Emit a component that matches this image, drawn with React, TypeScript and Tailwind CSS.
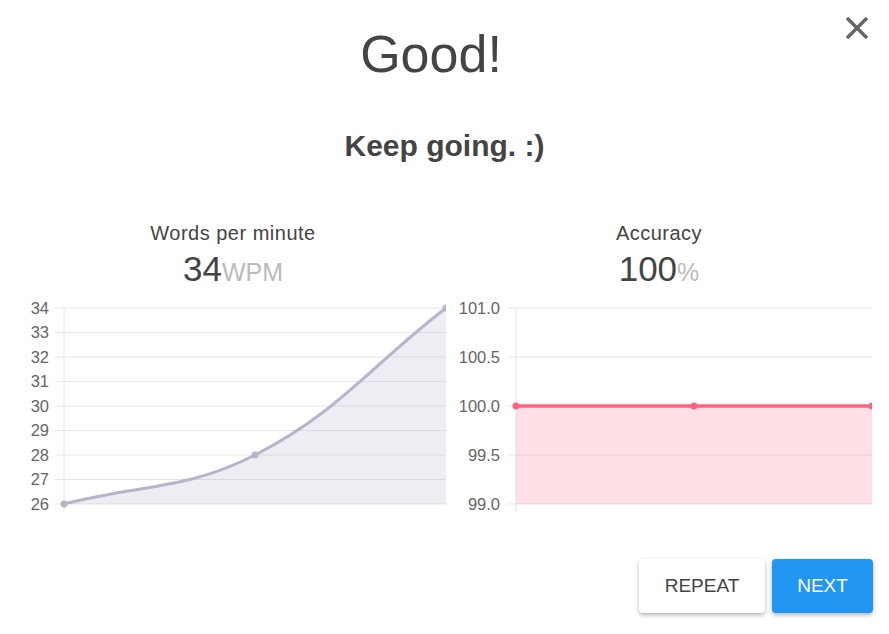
import React from "react";

const font = { fontFamily: '"Liberation Sans", Arial, sans-serif' };

function WpmChart() {
  const ys = [34, 33, 32, 31, 30, 29, 28, 27, 26];
  return (
    <svg width="426" height="224" className="block overflow-hidden">
      {ys.map((v, i) => {
        const y = 12 + i * 24.5;
        return (
          <g key={v}>
            <line x1="35" x2="426" y1={y} y2={y} stroke="#e6e6e6" strokeWidth="1" />
            <text x="29" y={y + 5.5} textAnchor="end" fontSize="16.5" fill="#666" style={font}>
              {v}
            </text>
          </g>
        );
      })}
      <line x1="44" x2="44" y1="12" y2="216" stroke="#e6e6e6" strokeWidth="1" />
      <path
        d="M44 208 C120.4 188.4 166.2 194.3 235 159 C319 115.9 349.6 70.8 426 12 L426 208 Z"
        fill="rgba(177,174,201,0.22)"
      />
      <path
        d="M44 208 C120.4 188.4 166.2 194.3 235 159 C319 115.9 349.6 70.8 426 12"
        fill="none"
        stroke="#b7b4cb"
        strokeWidth="3"
      />
      <circle cx="44" cy="208" r="3.5" fill="#b7b4cb" />
      <circle cx="235" cy="159" r="3.5" fill="#b7b4cb" />
      <circle cx="426" cy="12" r="3.5" fill="#b7b4cb" />
    </svg>
  );
}

function AccuracyChart() {
  const ys = ["101.0", "100.5", "100.0", "99.5", "99.0"];
  return (
    <svg width="426" height="224" className="block overflow-hidden">
      {ys.map((v, i) => {
        const y = 12 + i * 49;
        return (
          <g key={v}>
            <line x1="61" x2="426" y1={y} y2={y} stroke="#e6e6e6" strokeWidth="1" />
            <text x="54" y={y + 5.5} textAnchor="end" fontSize="16.5" fill="#666" style={font}>
              {v}
            </text>
          </g>
        );
      })}
      <line x1="70" x2="70" y1="12" y2="216" stroke="#e6e6e6" strokeWidth="1" />
      <rect x="70" y="110" width="356" height="98" fill="rgba(255,99,132,0.2)" />
      <line x1="70" x2="426" y1="110" y2="110" stroke="#ff6384" strokeWidth="3.5" />
      <circle cx="70" cy="110" r="3.5" fill="#ff6384" />
      <circle cx="248" cy="110" r="3.5" fill="#ff6384" />
      <circle cx="426" cy="110" r="3.5" fill="#ff6384" />
    </svg>
  );
}

export default function App() {
  return (
    <div className="relative w-[889px] h-[634px] bg-white text-[#444]" style={font}>
      <button className="absolute right-[20px] top-[16px]">
        <svg width="24" height="24" viewBox="0 0 24 24" className="block">
          <path d="M2 2 L22 22 M22 2 L2 22" stroke="#666" strokeWidth="3.4" />
        </svg>
      </button>

      <div className="text-center">
        <h1 className="pt-[22px] pr-[27px] text-[52px] leading-[64px] text-[#444]">Good!</h1>
        <p className="mt-[42px] text-[30px] leading-[36px] font-bold text-[#444]">Keep going. :)</p>
      </div>

      <div className="mt-[57px] px-[20px] grid grid-cols-2 w-[892px]">
        <div className="flex flex-col items-center">
          <div className="text-[20px] leading-[24px] tracking-[0.5px] text-[#444]">Words per minute</div>
          <div className="mt-[4px] text-[35px] leading-[40px]">
            <span className="text-[#444]">34</span>
            <span className="text-[25px] text-[#bbb]">WPM</span>
          </div>
          <div className="self-stretch mt-[4px]">
            <WpmChart />
          </div>
        </div>
        <div className="flex flex-col items-center">
          <div className="text-[20px] leading-[24px] tracking-[0.5px] text-[#444]">Accuracy</div>
          <div className="mt-[4px] text-[35px] leading-[40px]">
            <span className="text-[#444]">100</span>
            <span className="text-[25px] text-[#bbb]">%</span>
          </div>
          <div className="self-stretch mt-[4px]">
            <AccuracyChart />
          </div>
        </div>
      </div>

      <div className="flex justify-end gap-[7px] pr-[16px] mt-[39px]">
        <button className="w-[126px] h-[54px] rounded bg-white text-[19px] text-[#444] shadow-[0_2px_4px_rgba(0,0,0,0.3)]">
          REPEAT
        </button>
        <button className="w-[101px] h-[54px] rounded bg-[#2196f3] text-[19px] text-white shadow-[0_2px_4px_rgba(0,0,0,0.3)]">
          NEXT
        </button>
      </div>
    </div>
  );
}
